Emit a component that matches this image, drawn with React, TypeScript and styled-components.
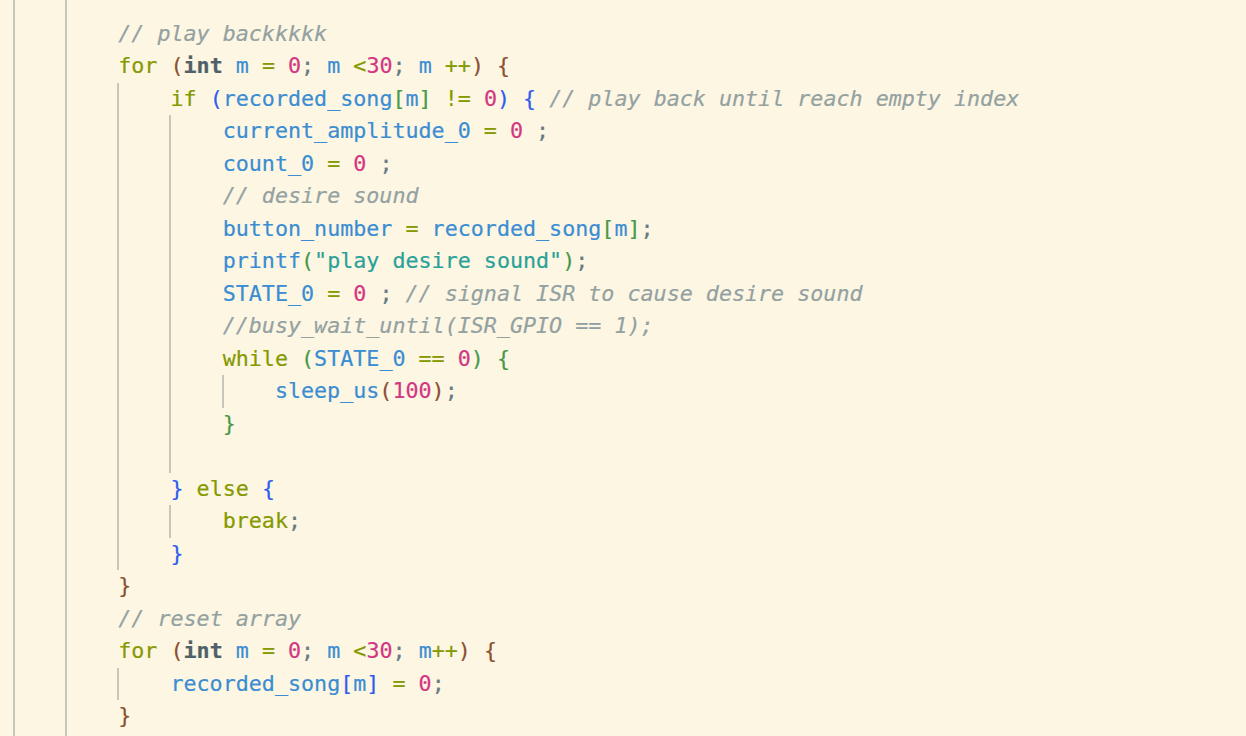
import React from "react";
import styled, { createGlobalStyle } from "styled-components";

type Kind = "k" | "t" | "v" | "n" | "o" | "p" | "s" | "c" | "b0" | "b1" | "b2" | "w";
type Tok = [Kind, string];
type LineData = { level: number; toks: Tok[] };

const GlobalStyle = createGlobalStyle`
  html, body {
    margin: 0;
    padding: 0;
    background: #fdf6e3;
  }
  #root {
    height: 100vh;
    overflow: hidden;
  }
`;

const colors: Record<Kind, string> = {
  k: "#859900",
  t: "#4f6068",
  v: "#3a8dd2",
  n: "#d33682",
  o: "#859900",
  p: "#657b83",
  s: "#2aa198",
  c: "#93a1a1",
  b0: "#8b5030",
  b1: "#2f5cf0",
  b2: "#46994a",
  w: "#657b83",
};

const Editor = styled.div`
  height: 100vh;
  overflow: hidden;
  background: #fdf6e3;
  font-family: "DejaVu Sans Mono", "Liberation Mono", monospace;
  font-size: 21.7px;
  padding-left: 13.8px;
  -webkit-text-stroke: 0.2px currentColor;
`;

const Code = styled.div`
  display: flex;
  flex-direction: column;
  margin-top: -14.75px;
`;

const Line = styled.div`
  display: flex;
  align-items: center;
  height: 32.5px;
  white-space: pre;
  line-height: 32.5px;
`;

const Indent = styled.span`
  display: inline-block;
  flex: none;
  width: 4ch;
  height: 100%;
  box-shadow: inset 2px 0 0 #c6c6bc;
  margin-left: -1px;
  padding-left: 1px;
`;

const Text = styled.span`
  display: inline-block;
`;

const Token = styled.span<{ $kind: Kind }>`
  color: ${(p) => colors[p.$kind]};
  font-style: ${(p) => (p.$kind === "c" ? "italic" : "normal")};
  font-weight: ${(p) => (p.$kind === "t" ? "bold" : "normal")};
`;

const w: Tok = ["w", " "];

const lines: LineData[] = [
  { level: 2, toks: [] },
  { level: 2, toks: [["c", "// play backkkkk"]] },
  {
    level: 2,
    toks: [
      ["k", "for"], w, ["b0", "("], ["t", "int"], w, ["v", "m"], w, ["o", "="], w, ["n", "0"], ["p", ";"], w,
      ["v", "m"], w, ["o", "<"], ["n", "30"], ["p", ";"], w, ["v", "m"], w, ["o", "++"], ["b0", ")"], w, ["b0", "{"],
    ],
  },
  {
    level: 3,
    toks: [
      ["k", "if"], w, ["b1", "("], ["v", "recorded_song"], ["b2", "["], ["v", "m"], ["b2", "]"], w, ["o", "!="], w,
      ["n", "0"], ["b1", ")"], w, ["b1", "{"], w, ["c", "// play back until reach empty index"],
    ],
  },
  { level: 4, toks: [["v", "current_amplitude_0"], w, ["o", "="], w, ["n", "0"], w, ["p", ";"]] },
  { level: 4, toks: [["v", "count_0"], w, ["o", "="], w, ["n", "0"], w, ["p", ";"]] },
  { level: 4, toks: [["c", "// desire sound"]] },
  {
    level: 4,
    toks: [["v", "button_number"], w, ["o", "="], w, ["v", "recorded_song"], ["b2", "["], ["v", "m"], ["b2", "]"], ["p", ";"]],
  },
  { level: 4, toks: [["v", "printf"], ["b2", "("], ["s", "\"play desire sound\""], ["b2", ")"], ["p", ";"]] },
  {
    level: 4,
    toks: [["v", "STATE_0"], w, ["o", "="], w, ["n", "0"], w, ["p", ";"], w, ["c", "// signal ISR to cause desire sound"]],
  },
  { level: 4, toks: [["c", "//busy_wait_until(ISR_GPIO == 1);"]] },
  {
    level: 4,
    toks: [["k", "while"], w, ["b2", "("], ["v", "STATE_0"], w, ["o", "=="], w, ["n", "0"], ["b2", ")"], w, ["b2", "{"]],
  },
  { level: 5, toks: [["v", "sleep_us"], ["b0", "("], ["n", "100"], ["b0", ")"], ["p", ";"]] },
  { level: 4, toks: [["b2", "}"]] },
  { level: 4, toks: [] },
  { level: 3, toks: [["b1", "}"], w, ["k", "else"], w, ["b1", "{"]] },
  { level: 4, toks: [["k", "break"], ["p", ";"]] },
  { level: 3, toks: [["b1", "}"]] },
  { level: 2, toks: [["b0", "}"]] },
  { level: 2, toks: [["c", "// reset array"]] },
  {
    level: 2,
    toks: [
      ["k", "for"], w, ["b0", "("], ["t", "int"], w, ["v", "m"], w, ["o", "="], w, ["n", "0"], ["p", ";"], w,
      ["v", "m"], w, ["o", "<"], ["n", "30"], ["p", ";"], w, ["v", "m"], ["o", "++"], ["b0", ")"], w, ["b0", "{"],
    ],
  },
  {
    level: 3,
    toks: [["v", "recorded_song"], ["b1", "["], ["v", "m"], ["b1", "]"], w, ["o", "="], w, ["n", "0"], ["p", ";"]],
  },
  { level: 2, toks: [["b0", "}"]] },
  { level: 2, toks: [] },
];

export default function App() {
  return (
    <>
      <GlobalStyle />
      <Editor>
        <Code>
          {lines.map((line, i) => (
            <Line key={i}>
              {Array.from({ length: line.level }).map((_, j) => (
                <Indent key={j} />
              ))}
              <Text>
                {line.toks.map(([kind, text], j) => (
                  <Token key={j} $kind={kind}>
                    {text}
                  </Token>
                ))}
              </Text>
            </Line>
          ))}
        </Code>
      </Editor>
    </>
  );
}
